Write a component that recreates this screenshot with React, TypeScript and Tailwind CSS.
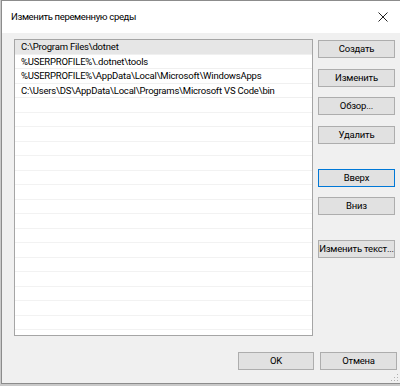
import React from "react";

const rows = [
  "C:\\Program Files\\dotnet",
  "%USERPROFILE%\\.dotnet\\tools",
  "%USERPROFILE%\\AppData\\Local\\Microsoft\\WindowsApps",
  "C:\\Users\\DS\\AppData\\Local\\Programs\\Microsoft VS Code\\bin",
];

function Btn({ children, cls = "", primary = false }: { children: React.ReactNode; cls?: string; primary?: boolean }) {
  return (
    <div
      className={
        "flex h-[18px] w-[77px] items-center justify-center whitespace-nowrap bg-[#e1e1e1] text-[9.5px] leading-none tracking-[-0.2px] text-black " +
        (primary ? "border-[1.5px] border-[#0078d7] " : "border border-[#adadad] ") +
        cls
      }
    >
      {children}
    </div>
  );
}

export default function App() {
  const empty = Array.from({ length: 16 });
  return (
    <div
      className="relative h-[386px] w-[400px] overflow-hidden bg-[#c9c9c9]"
      style={{ fontFamily: 'Roboto, "Liberation Sans", Arial, sans-serif' }}
    >
      <div className="ml-[1px] flex h-[384px] w-[410px] flex-col border border-[#8c8c8c] bg-[#f0f0f0]">
        <div className="flex h-[32px] items-center justify-between bg-white pl-[9px] pr-[20px]">
          <span className="text-[9.5px] tracking-[-0.35px] text-black">Изменить переменную среды</span>
          <svg width="10" height="10" viewBox="0 0 10 10" className="mr-[2px]">
            <path d="M0.5 0.5 L9.5 9.5 M9.5 0.5 L0.5 9.5" stroke="#222" strokeWidth="1" />
          </svg>
        </div>
        <div className="flex flex-col pl-[12px] pt-[6px]">
          <div className="flex">
            <div className="h-[297px] w-[299px] overflow-hidden border border-[#a5a5a5] bg-white">
              {rows.map((r, i) => (
                <div
                  key={i}
                  className={
                    "flex h-[14.5px] items-center whitespace-nowrap border-b border-[#f0f0f0] pl-[6px] text-[9.5px] leading-none tracking-[-0.2px] text-black " +
                    (i === 0 ? "bg-[#e6e6e6]" : "")
                  }
                >
                  {r}
                </div>
              ))}
              {empty.map((_, i) => (
                <div key={"e" + i} className="h-[14.5px] border-b border-[#f2f2f2]" />
              ))}
            </div>
            <div className="ml-[5px] flex flex-col pt-[1px]">
              <Btn>Создать</Btn>
              <Btn cls="mt-[11px]">Изменить</Btn>
              <Btn cls="mt-[10px]">Обзор...</Btn>
              <Btn cls="mt-[11px]">Удалить</Btn>
              <Btn cls="mt-[25px]" primary>
                Вверх
              </Btn>
              <Btn cls="mt-[10px]">Вниз</Btn>
              <Btn cls="mt-[25px]">Изменить текст...</Btn>
            </div>
          </div>
          <div className="mt-[16px] flex w-[383px] justify-end gap-[6px]">
            <Btn cls="!w-[76px]">OK</Btn>
            <Btn cls="!w-[77px]">Отмена</Btn>
          </div>
        </div>
      </div>
      <svg className="absolute left-[391px] top-[374px]" width="8" height="8" viewBox="0 0 8 8">
        <rect x="6" y="0" width="1" height="1" fill="#b0b0b0" />
        <rect x="3" y="3" width="1" height="1" fill="#b0b0b0" />
        <rect x="6" y="3" width="1" height="1" fill="#b0b0b0" />
        <rect x="0" y="6" width="1" height="1" fill="#b0b0b0" />
        <rect x="3" y="6" width="1" height="1" fill="#b0b0b0" />
        <rect x="6" y="6" width="1" height="1" fill="#b0b0b0" />
      </svg>
    </div>
  );
}
